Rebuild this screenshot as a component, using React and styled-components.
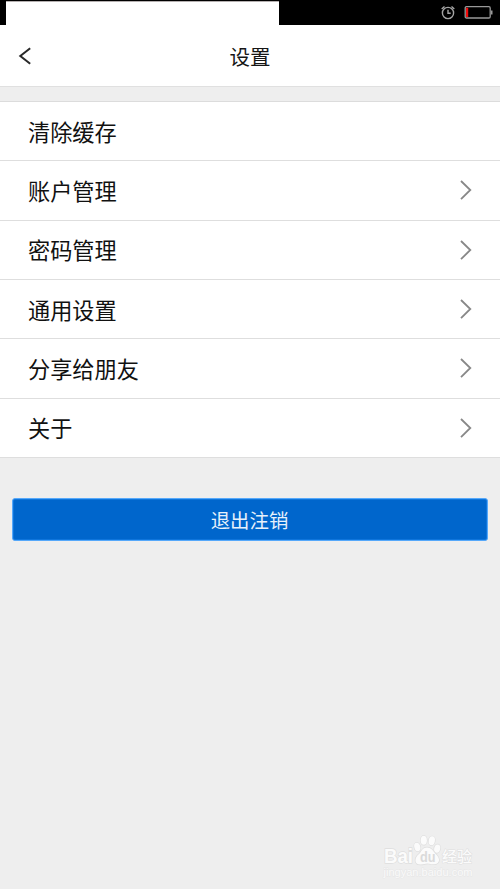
import React from "react";
import styled, { createGlobalStyle } from "styled-components";

const GlobalStyle = createGlobalStyle`
  * { box-sizing: border-box; }
  body {
    margin: 0;
    background: #eee;
    font-family: "Liberation Sans", "Noto Sans CJK SC", sans-serif;
  }
`;

const Screen = styled.div`
  position: relative;
  height: 889px;
  overflow: hidden;
  background: #eee;
`;

const StatusBar = styled.div`
  display: flex;
  justify-content: space-between;
  height: 25px;
  padding: 1px 7px 0 6px;
  background: #000;
`;

const StatusBlank = styled.div`
  width: 273px;
  height: 24px;
  background: #fff;
  border-top: 1px solid #b5b0b0;
`;

const StatusIcons = styled.div`
  display: flex;
  gap: 9px;
  padding-top: 4px;
  svg { display: block; }
`;

const Header = styled.header`
  display: grid;
  grid-template-columns: 60px 1fr 60px;
  align-items: center;
  height: 62px;
  background: #fff;
  border-bottom: 1px solid #e0e0e0;
`;

const BackButton = styled.button`
  display: flex;
  padding: 0 0 0 18px;
  border: 0;
  background: none;
`;

const Title = styled.h1`
  margin: 4px 0 0;
  text-align: center;
  font-size: 20.5px;
  line-height: 30px;
  font-weight: 400;
  color: #161616;
`;

const List = styled.ul`
  display: grid;
  grid-template-rows: repeat(6, 1fr);
  height: 357px;
  margin: 14px 0 0;
  padding: 0;
  list-style: none;
  background: #fff;
  border-top: 1px solid #dcdcdc;
`;

const Row = styled.li`
  display: flex;
  align-items: center;
  justify-content: space-between;
  padding: 5px 27px 0 28px;
  border-bottom: 1px solid #dedede;
  font-size: 22.2px;
  line-height: 32px;
  color: #111;
  svg { margin-top: -5px; }
`;

const LogoutButton = styled.button`
  display: block;
  width: 476px;
  height: 43px;
  margin: 40px 0 0 12px;
  padding: 2px 1px 0 0;
  border: 1px solid #55a8fa;
  border-radius: 3px;
  box-shadow: inset 0 0 0 1px #0e75dc;
  background: #06c;
  color: #e7f1fb;
  font: inherit;
  font-size: 19.4px;
  line-height: 28px;
`;

const Watermark = styled.div`
  position: absolute;
  left: 380px;
  top: 831px;
  svg { display: block; }
`;

const AlarmIcon = () => (
  <svg width="14" height="15" viewBox="0 0 14 15" fill="none" stroke="#a5a5a5" strokeWidth="1.4">
    <circle cx="7" cy="8" r="5.6" />
    <path d="M7 4.7V8.3H9.7M.7 4L3.5 1.4M13.3 4L10.5 1.4" />
  </svg>
);

const BatteryIcon = () => (
  <svg width="29" height="15" viewBox="0 0 29 15">
    <rect x="1.2" y="1.7" width="25" height="11.3" rx="1.3" fill="none" stroke="#999" strokeWidth="1.3" />
    <rect x="2" y="2.8" width="2.2" height="9.2" fill="#f20c0c" />
    <path d="M27 5.5H28.5V9.5H27Z" fill="#999" />
  </svg>
);

const BackIcon = () => (
  <svg width="16" height="20" viewBox="0 0 16 20" fill="none" stroke="#292929" strokeWidth="2">
    <path d="M12.2 2.2L2.3 10L12.2 17.8" />
  </svg>
);

const Chevron = () => (
  <svg width="14" height="22" viewBox="0 0 14 22" fill="none" stroke="#888" strokeWidth="1.8">
    <path d="M2 2L11.3 11L2 20.2" />
  </svg>
);

const BaiduMark = () => (
  <svg width="100" height="52" viewBox="0 0 100 52" fill="#fbfbfb" stroke="#dedede" strokeWidth="1.4" paintOrder="stroke">
    <text x="4" y="32" fontSize="20" textLength="29" lengthAdjust="spacingAndGlyphs" fontFamily="Liberation Sans" fontWeight="700">Bai</text>
    <ellipse cx="37.3" cy="16" rx="3" ry="4.3" transform="rotate(-15 37.3 16)" />
    <ellipse cx="43.8" cy="9.3" rx="3.1" ry="4.5" />
    <ellipse cx="51.8" cy="9.8" rx="3.1" ry="4.5" transform="rotate(10 51.8 9.8)" />
    <ellipse cx="57.2" cy="17.6" rx="3" ry="4.2" transform="rotate(12 57.2 17.6)" />
    <path d="M47 16.5C42 16.5 41.5 21 39 23C34 27 34 34 41 33.5C44 33.3 45 32.5 47.5 32.5C50 32.5 53 34 56 33C61 31 59 26 56 23.2C53 20.5 52 16.5 47 16.5Z" />
    <text x="40" y="31" fontSize="14" textLength="15.5" lengthAdjust="spacingAndGlyphs" fill="#dadada" stroke="none" fontFamily="Liberation Sans" fontWeight="700">du</text>
    <text x="62" y="31" fontSize="15" textLength="30" strokeWidth="1" fontFamily="Noto Sans CJK SC" fontWeight="500">经验</text>
    <text x="3.5" y="45" fontSize="10.5" textLength="89" lengthAdjust="spacingAndGlyphs" fill="#fafafa" stroke="#e6e6e6" strokeWidth=".8" fontFamily="Liberation Sans">jingyan.baidu.com</text>
  </svg>
);

const items = [
  { label: "清除缓存", link: false },
  { label: "账户管理", link: true },
  { label: "密码管理", link: true },
  { label: "通用设置", link: true },
  { label: "分享给朋友", link: true },
  { label: "关于", link: true },
];

export default function App() {
  return (
    <Screen>
      <GlobalStyle />
      <StatusBar>
        <StatusBlank />
        <StatusIcons>
          <AlarmIcon />
          <BatteryIcon />
        </StatusIcons>
      </StatusBar>
      <Header>
        <BackButton aria-label="返回"><BackIcon /></BackButton>
        <Title>设置</Title>
      </Header>
      <List>
        {items.map(({ label, link }) => (
          <Row key={label}>
            <span>{label}</span>
            {link && <Chevron />}
          </Row>
        ))}
      </List>
      <LogoutButton>退出注销</LogoutButton>
      <Watermark><BaiduMark /></Watermark>
    </Screen>
  );
}
